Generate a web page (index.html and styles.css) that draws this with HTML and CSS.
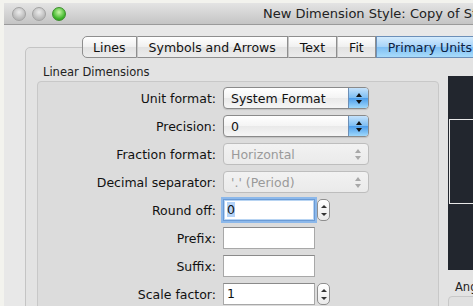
FILE: index.html
```html
<!DOCTYPE html>
<html lang="en">
<head>
  <meta charset="UTF-8" />
  <title>New Dimension Style</title>
  <link rel="stylesheet" href="styles.css">
</head>
<body>

<div class="window">
  <!-- title bar -->
  <div class="titlebar">
    <div class="lights">
      <span class="light"></span>
      <span class="light"></span>
      <span class="light green"></span>
    </div>
    <div class="title">New Dimension Style: Copy of Standard</div>
  </div>

  <div class="content">
    <div class="tabs">
      <span class="tab first">Lines</span>
      <span class="tab">Symbols and Arrows</span>
      <span class="tab">Text</span>
      <span class="tab">Fit</span>
      <span class="tab selected">Primary Units</span>
    </div>

    <div class="tabbox">
      <div class="left-col">
        <div class="group-label">Linear Dimensions</div>
        <div class="group">
          <div class="row">
            <label>Unit format:</label>
            <div class="popup"><span>System Format</span><span class="arrows"><i class="up"></i><i class="down"></i></span></div>
          </div>
          <div class="row">
            <label>Precision:</label>
            <div class="popup"><span>0</span><span class="arrows"><i class="up"></i><i class="down"></i></span></div>
          </div>
          <div class="row">
            <label>Fraction format:</label>
            <div class="popup disabled"><span>Horizontal</span><span class="arrows"><i class="up"></i><i class="down"></i></span></div>
          </div>
          <div class="row">
            <label>Decimal separator:</label>
            <div class="popup disabled"><span>'.' (Period)</span><span class="arrows"><i class="up"></i><i class="down"></i></span></div>
          </div>
          <div class="row">
            <label>Round off:</label>
            <div class="field focus"><span class="sel">0</span></div>
            <div class="stepper"><i class="up"></i><i class="down"></i></div>
          </div>
          <div class="row">
            <label>Prefix:</label>
            <div class="field"></div>
          </div>
          <div class="row">
            <label>Suffix:</label>
            <div class="field"></div>
          </div>
          <div class="row">
            <label>Scale factor:</label>
            <div class="field">1</div>
            <div class="stepper"><i class="up"></i><i class="down"></i></div>
          </div>
        </div>
      </div>

      <div class="right-col">
        <div class="preview">
          <div class="preview-rect"></div>
        </div>
        <div class="group-label small">Angular Dimensions</div>
        <div class="group stub"></div>
      </div>
    </div>
  </div>
</div>

</body>
</html>
```

FILE: styles.css
```css
* { box-sizing: border-box; }
body {
  margin: 0;
  padding-left: 4px;
  background-color: #f3f3ee;
  font-family: 'DejaVu Sans', 'Lucida Grande', sans-serif;
  font-size: 12.5px;
  color: #111;
  overflow: hidden;
  height: 306px;
}
.window {
  background-color: #e8e8e8;
  margin-top: 3px;
  height: 303px;
  width: 600px;
  overflow: hidden;
}

/* title bar */
.titlebar {
  height: 22px;
  display: flex;
  align-items: center;
  background: linear-gradient(#e4e4e4, #c4c4c4);
  border-bottom: 1px solid #9a9a9a;
}
.lights {
  display: flex;
  gap: 6px;
  padding-left: 8px;
}
.light {
  width: 14px;
  height: 14px;
  border-radius: 50%;
  background: radial-gradient(circle at 50% 35%, #ececec, #b8b8b8 70%);
  border: 1px solid #a2a2a2;
}
.light.green {
  background: radial-gradient(circle at 50% 35%, #c8f7a6, #3fb62a 65%, #2a8a1c);
  border-color: #3c8e2c;
}
.title {
  padding-left: 197px;
  font-size: 13px;
  color: #222;
  white-space: nowrap;
}

/* tabs */
.content {
  padding: 11px 0 0 21px;
}
.tabs {
  display: flex;
  margin-left: 57px;
  margin-bottom: -11px;
  position: relative;
  height: 22px;
}
.tab {
  padding: 0 11px;
  height: 22px;
  line-height: 21px;
  border: 1px solid #8e8e8e;
  border-left: 1px solid #c6c6c6;
  background: linear-gradient(#ffffff, #f0f0f0 50%, #e2e2e2 51%, #ececec);
  white-space: nowrap;
}
.tab.first {
  padding: 0 10px;
  border-left-color: #8e8e8e;
  border-radius: 5px 0 0 5px;
}
.tab.selected {
  background: linear-gradient(#d4ebfd, #a6d3f8 50%, #7ebef3 51%, #a8dcfb);
  border-color: #6c8fb8;
  color: #0d2140;
}

.tabbox {
  display: flex;
  gap: 9px;
  border: 1px solid #c4c4c4;
  border-radius: 5px;
  background-color: #e3e3e3;
  padding: 17px 0 0 11px;
  height: 270px;
}
.left-col {
  width: 402px;
  flex: none;
}
.group-label {
  padding-left: 6px;
  height: 16px;
  font-size: 11.5px;
  color: #222;
}
.group {
  border: 1px solid #c8c8c8;
  border-radius: 4px;
  background-color: #dcdcdc;
  padding: 5px 0 0;
  display: flex;
  flex-direction: column;
  gap: 6px;
  height: 240px;
}

/* form rows */
.row {
  display: flex;
  align-items: center;
  height: 22px;
}
.row label {
  width: 179px;
  text-align: right;
  padding-right: 1px;
  margin-right: 6px;
  white-space: nowrap;
}
.popup {
  width: 146px;
  height: 22px;
  display: flex;
  align-items: center;
  justify-content: space-between;
  border: 1px solid #8a8a8a;
  border-radius: 4px;
  background: linear-gradient(#ffffff, #f4f4f4 50%, #e9e9e9 51%, #f6f6f6);
  padding-left: 7px;
  overflow: hidden;
  box-shadow: 0 1px 1px rgba(0, 0, 0, 0.12);
}
.popup .arrows {
  width: 20px;
  height: 20px;
  display: flex;
  flex-direction: column;
  align-items: center;
  justify-content: center;
  gap: 3px;
  background: linear-gradient(#c5e2fb, #7bbdf3 50%, #4c9deb 51%, #9fd8fb);
  border-left: 1px solid #6d8fb6;
}
.up, .down {
  display: block;
  width: 0;
  height: 0;
  border-left: 3px solid transparent;
  border-right: 3px solid transparent;
}
.up { border-bottom: 4px solid #111; }
.down { border-top: 4px solid #111; }
.popup.disabled {
  border-color: #bdbdbd;
  color: #9a9a9a;
  box-shadow: none;
  background: linear-gradient(#f2f2f2, #eaeaea);
}
.popup.disabled .arrows {
  background: none;
  border-left: none;
}
.popup.disabled .up { border-bottom-color: #a8a8a8; }
.popup.disabled .down { border-top-color: #a8a8a8; }

.field {
  width: 92px;
  height: 22px;
  background-color: #fff;
  border: 1px solid #a8a8a8;
  border-top-color: #8a8a8a;
  padding: 2px 3px;
  line-height: 16px;
}
.field.focus {
  border-color: #6a9bd6;
  box-shadow: 0 0 0 2px #8cb8ea, inset 0 0 0 1px #b8d4f2;
}
.sel {
  background-color: #b5d4f8;
}
.stepper {
  margin-left: 2px;
  width: 13px;
  height: 22px;
  border: 1px solid #8e8e8e;
  border-radius: 5px;
  background: linear-gradient(#ffffff, #eaeaea);
  display: flex;
  flex-direction: column;
  align-items: center;
  justify-content: center;
  gap: 5px;
}
.stepper .up { border-bottom-color: #333; border-width: 0 3px 3px; }
.stepper .down { border-top-color: #333; border-width: 3px 3px 0; }

/* preview side */
.right-col {
  width: 200px;
  flex: none;
  padding-top: 11px;
}
.preview {
  height: 194px;
  background-color: #22262e;
  padding-top: 43px;
}
.preview-rect {
  margin-left: 1px;
  height: 85px;
  border: 1px solid #e8e8e8;
  border-right: none;
}
.group-label.small {
  margin-top: 10px;
  padding-left: 7px;
}
.group.stub {
  height: 40px;
  background-color: #e0e0e0;
}
```
